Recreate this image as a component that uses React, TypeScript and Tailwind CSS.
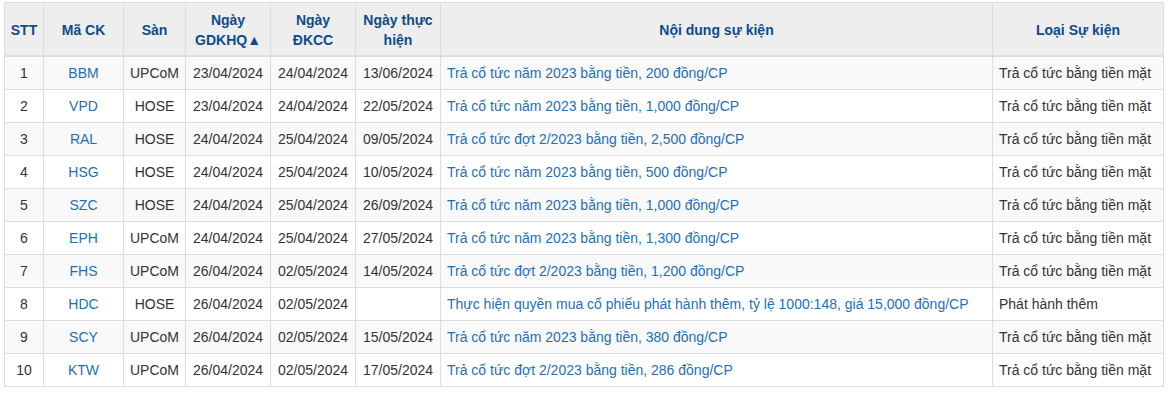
import React from "react";

const rows = [
  ["1", "BBM", "UPCoM", "23/04/2024", "24/04/2024", "13/06/2024", "Trả cổ tức năm 2023 bằng tiền, 200 đồng/CP", "Trả cổ tức bằng tiền mặt"],
  ["2", "VPD", "HOSE", "23/04/2024", "24/04/2024", "22/05/2024", "Trả cổ tức năm 2023 bằng tiền, 1,000 đồng/CP", "Trả cổ tức bằng tiền mặt"],
  ["3", "RAL", "HOSE", "24/04/2024", "25/04/2024", "09/05/2024", "Trả cổ tức đợt 2/2023 bằng tiền, 2,500 đồng/CP", "Trả cổ tức bằng tiền mặt"],
  ["4", "HSG", "HOSE", "24/04/2024", "25/04/2024", "10/05/2024", "Trả cổ tức năm 2023 bằng tiền, 500 đồng/CP", "Trả cổ tức bằng tiền mặt"],
  ["5", "SZC", "HOSE", "24/04/2024", "25/04/2024", "26/09/2024", "Trả cổ tức năm 2023 bằng tiền, 1,000 đồng/CP", "Trả cổ tức bằng tiền mặt"],
  ["6", "EPH", "UPCoM", "24/04/2024", "25/04/2024", "27/05/2024", "Trả cổ tức năm 2023 bằng tiền, 1,300 đồng/CP", "Trả cổ tức bằng tiền mặt"],
  ["7", "FHS", "UPCoM", "26/04/2024", "02/05/2024", "14/05/2024", "Trả cổ tức đợt 2/2023 bằng tiền, 1,200 đồng/CP", "Trả cổ tức bằng tiền mặt"],
  ["8", "HDC", "HOSE", "26/04/2024", "02/05/2024", "", "Thực hiện quyền mua cổ phiếu phát hành thêm, tỷ lệ 1000:148, giá 15,000 đồng/CP", "Phát hành thêm"],
  ["9", "SCY", "UPCoM", "26/04/2024", "02/05/2024", "15/05/2024", "Trả cổ tức năm 2023 bằng tiền, 380 đồng/CP", "Trả cổ tức bằng tiền mặt"],
  ["10", "KTW", "UPCoM", "26/04/2024", "02/05/2024", "17/05/2024", "Trả cổ tức đợt 2/2023 bằng tiền, 286 đồng/CP", "Trả cổ tức bằng tiền mặt"],
];

const th = "border border-[#dddddd] border-b-2 px-[4px] pt-[7px] pb-[5px] text-center align-middle font-bold text-[#0d4b8c] leading-[20px]";
const td = "border border-[#dddddd] px-[6px] py-[7px] leading-[18px] align-middle whitespace-nowrap";

export default function App() {
  return (
    <div className="bg-white w-[1170px] h-[393px] pl-[4px] pt-[2px]" style={{ fontFamily: '"Liberation Sans", Arial, sans-serif' }}>
      <table className="border-collapse text-[14px] text-[#333333] w-[1159px] table-fixed">
        <colgroup>
          <col className="w-[39px]" />
          <col className="w-[80px]" />
          <col className="w-[62px]" />
          <col className="w-[85px]" />
          <col className="w-[85px]" />
          <col className="w-[85px]" />
          <col className="w-[552px]" />
          <col className="w-[171px]" />
        </colgroup>
        <thead>
          <tr className="bg-[#eeeeee]">
            <th className={th}>STT</th>
            <th className={th}>Mã CK</th>
            <th className={th}>Sàn</th>
            <th className={th}>Ngày<br />GDKHQ▲</th>
            <th className={th}>Ngày<br />ĐKCC</th>
            <th className={th}>Ngày thực<br />hiện</th>
            <th className={th}>Nội dung sự kiện</th>
            <th className={th}>Loại Sự kiện</th>
          </tr>
        </thead>
        <tbody>
          {rows.map((r, i) => (
            <tr key={i} className={i % 2 === 0 ? "bg-[#f9f9f9]" : "bg-white"}>
              <td className={td + " text-center"}>{r[0]}</td>
              <td className={td + " text-center text-[#1f6fb5]"}>{r[1]}</td>
              <td className={td + " text-center"}>{r[2]}</td>
              <td className={td + " text-center"}>{r[3]}</td>
              <td className={td + " text-center"}>{r[4]}</td>
              <td className={td + " text-center"}>{r[5]}</td>
              <td className={td + " text-left text-[#1f6fb5]"}>{r[6]}</td>
              <td className={td + " text-left"}>{r[7]}</td>
            </tr>
          ))}
        </tbody>
      </table>
    </div>
  );
}
